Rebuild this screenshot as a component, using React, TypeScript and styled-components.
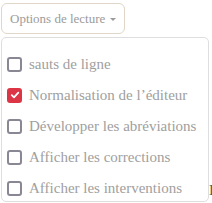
import styled, { createGlobalStyle } from "styled-components";

const GlobalStyle = createGlobalStyle`
    html, body {
        margin: 0;
        padding: 0;
        background: #ffffff;
        overflow: hidden;
        font-family: "Liberation Serif", "Times New Roman", Times, serif;
    }
`;

const serif = `"Liberation Serif", "Times New Roman", Times, serif`;

const Page = styled.div`
    position: relative;
    width: 212px;
    height: 203px;
    font-family: ${serif};
`;

const Toggle = styled.button`
    margin: 3px 0 0 1px;
    height: 31px;
    padding: 0 8px 0 8px;
    display: inline-flex;
    align-items: center;
    gap: 5px;
    background: #ffffff;
    border: 1px solid #e2d6c8;
    border-radius: 6px;
    font-family: ${serif};
    font-size: 13px;
    color: #9b9b9b;
`;

const Caret = styled.span`
    width: 0;
    height: 0;
    border-left: 3px solid transparent;
    border-right: 3px solid transparent;
    border-top: 3px solid #9b9b9b;
    margin-top: 1px;
`;

const Behind = styled.p`
    margin: 0;
    position: absolute;
    left: 209px;
    top: 182px;
    font-family: ${serif};
    font-size: 15px;
    color: #2e7050;
`;

const Menu = styled.div`
    position: absolute;
    top: 37px;
    left: 1px;
    width: 201px;
    box-sizing: content-box;
    padding: 14px 0 0 5px;
    height: 149px;
    background: #ffffff;
    border: 1px solid #dedede;
    border-radius: 5px;
    display: flex;
    flex-direction: column;
    gap: 7px;
    z-index: 2;
`;

const Item = styled.label`
    height: 24px;
    display: flex;
    align-items: center;
    gap: 7px;
    font-family: ${serif};
    font-size: 15px;
    color: #a0a0a0;
    white-space: nowrap;
`;

const Box = styled.span<{ $checked?: boolean }>`
    width: 15px;
    height: 15px;
    box-sizing: border-box;
    flex: none;
    border-radius: 3px;
    border: 2px solid ${(p) => (p.$checked ? "#dc3545" : "#8a8794")};
    background: ${(p) => (p.$checked ? "#dc3545" : "#ffffff")};
    display: flex;
    align-items: center;
    justify-content: center;
`;

const options = [
    { label: "sauts de ligne", checked: false },
    { label: "Normalisation de l’éditeur", checked: true },
    { label: "Développer les abréviations", checked: false },
    { label: "Afficher les corrections", checked: false },
    { label: "Afficher les interventions", checked: false },
];

export default function App() {
    return (
        <>
            <GlobalStyle />
            <Page>
                <Toggle>
                    Options de lecture
                    <Caret />
                </Toggle>
                <Behind>L</Behind>
                <Menu>
                    {options.map((o) => (
                        <Item key={o.label}>
                            <Box $checked={o.checked}>
                                {o.checked && (
                                    <svg width="10" height="10" viewBox="0 0 10 10">
                                        <path d="M1.8 5.2 L4 7.3 L8.3 2.6" fill="none" stroke="#fff" strokeWidth="1.8" strokeLinecap="round" strokeLinejoin="round" />
                                    </svg>
                                )}
                            </Box>
                            {o.label}
                        </Item>
                    ))}
                </Menu>
            </Page>
        </>
    );
}
